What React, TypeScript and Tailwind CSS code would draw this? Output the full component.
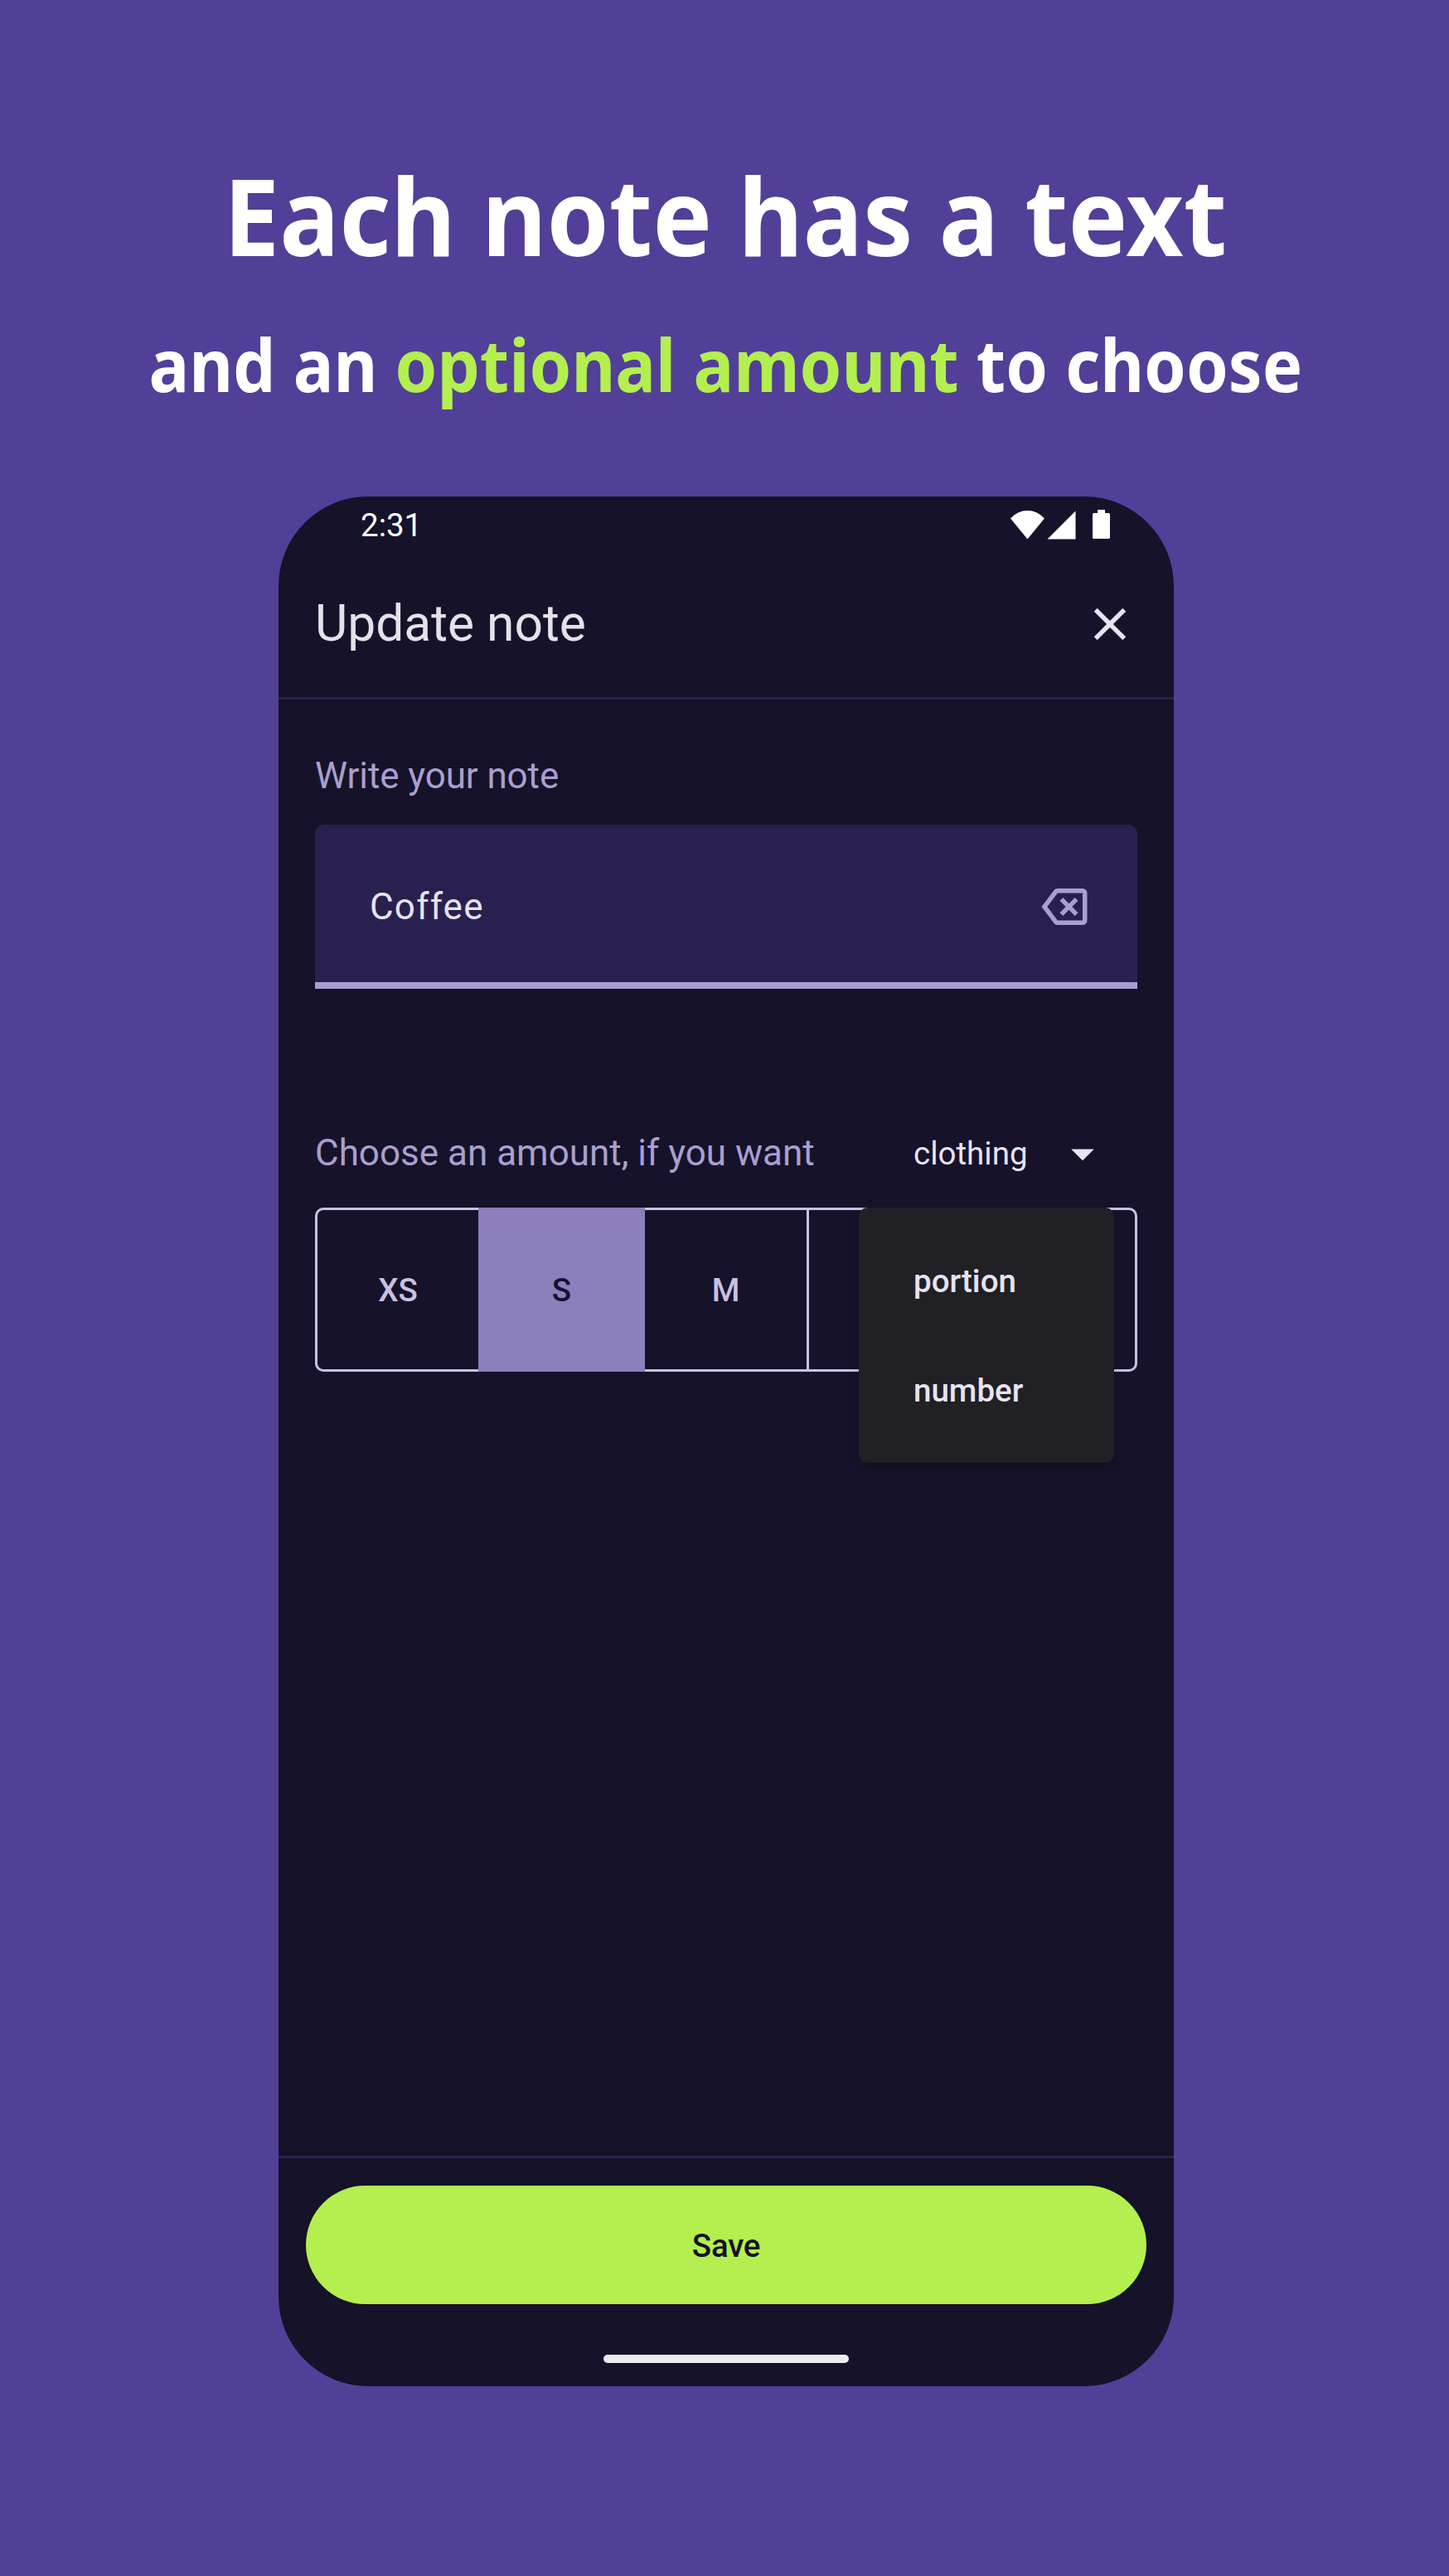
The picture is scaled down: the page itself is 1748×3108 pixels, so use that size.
import React from "react";

function StatusBar() {
  return (
    <div className="flex h-[66px] shrink-0 items-start justify-between pl-[99px] pr-[77px] text-white">
      <span className="mt-[10px] text-[38.5px] leading-[49px]">2:31</span>
      <div className="mt-4 flex items-start text-white">
        <svg className="mt-px h-[35px] w-[41px]" viewBox="0 0 41 35" fill="currentColor">
          <path d="M0 9.500Q8.500 0 20.500 0T41 9.500L20.500 34.500Z" />
        </svg>
        <svg className="ml-[3px] mt-px h-[35px] w-[35px]" viewBox="0 0 35 35" fill="currentColor">
          <path d="M0.500 34.500L34.500 0.500V34.500Z" />
        </svg>
        <svg className="ml-5 h-[35px] w-[21px]" viewBox="0 0 21 35" fill="currentColor">
          <path d="M6 0h9v4h4.500Q21 4 21 5.500v28Q21 35 19.500 35h-18Q0 35 0 33.500v-28Q0 4 1.500 4H6z" />
        </svg>
      </div>
    </div>
  );
}

function Header() {
  return (
    <header className="flex h-[179px] shrink-0 items-center justify-between border-b-[3px] border-[#2a204f] px-11">
      <h1 className="text-[60.5px] leading-[72px] text-[#e6e1e9]">Update note</h1>
      <button className="h-[66px] w-[66px] text-[#e7e3f0]">
        <svg viewBox="0 0 24 24" fill="currentColor">
          <path d="M19 6.410L17.590 5 12 10.590 6.410 5 5 6.410 10.590 12 5 17.590 6.410 19 12 13.410 17.590 19 19 17.590 13.410 12z" />
        </svg>
      </button>
    </header>
  );
}

function NoteField() {
  return (
    <div className="flex h-[198px] items-center justify-between rounded-t-[11px] border-b-8 border-[#a99fcf] bg-[#2a204f] pl-[66px] pr-[55px] pt-2">
      <span className="text-[44px] leading-[52px] tracking-[1.2px] text-[#e7e3f0]">Coffee</span>
      <svg className="h-[66px] w-[66px] text-[#a99fcf]" viewBox="0 -960 960 960" fill="currentColor">
        <path d="m456-320 104-104 104 104 56-56-104-104 104-104-56-56-104 104-104-104-56 56 104 104-104 104 56 56Zm-96 160q-19 0-36-8.500T296-192L80-480l216-288q11-15 28-23.500t36-8.500h440q33 0 56.500 23.500T880-720v480q0 33-23.500 56.500T800-160H360ZM180-480l180 240h440v-480H360L180-480Z" />
      </svg>
    </div>
  );
}

function UnitMenu() {
  return (
    <ul className="absolute right-7 top-0 h-[308px] w-[308px] rounded-[11px] bg-[#202025] pb-[21px] pl-[66px] pt-[23px] font-medium text-[#e7e3f0] shadow-[0_4px_12px_rgba(0,0,0,0.2)]">
      <li className="flex h-[132px] items-center">portion</li>
      <li className="flex h-[132px] items-center">number</li>
    </ul>
  );
}

function SizePicker() {
  return (
    <div className="relative text-[38.500px]">
      <div className="grid h-[198px] grid-cols-[194px_201px_198px_198px_1fr] rounded-[10px] border-[3px] border-[#c8c1e2] font-medium text-[#c8c1e2]">
        <div className="flex items-center justify-center pt-[2px]">XS</div>
        <div className="-my-[3px] flex items-center justify-center bg-[#8c7fbc] pt-[2px] text-[#17122a]">S</div>
        <div className="flex items-center justify-center border-r-[3px] border-[#c8c1e2] pt-[2px]">M</div>
        <div className="border-r-[3px] border-[#c8c1e2]" />
        <div />
      </div>
      <UnitMenu />
    </div>
  );
}

export default function App() {
  return (
    <div className="flex h-[3108px] w-[1748px] flex-col bg-[#523f98] font-['Roboto']">
      <div className="mt-[170px] flex shrink-0 flex-col items-center whitespace-nowrap pl-[2px] font-['Noto_Sans'] font-bold text-white">
        <div className="h-[177px] scale-x-[0.927] text-[130px] leading-[177px]">Each note has a text</div>
        <div className="mt-[32px] h-[120px] scale-x-[0.925] text-[88px] leading-[120px]">
          and an <span className="text-[#b3ef4f]">optional amount</span> to choose
        </div>
      </div>

      <main className="ml-[336px] mt-[100px] flex h-[2280px] w-[1080px] shrink-0 flex-col overflow-hidden rounded-[108px] bg-[#161229]">
        <StatusBar />
        <Header />
        <section className="flex-1 px-11 pt-[66px]">
          <h2 className="h-[85px] text-[44px] leading-[52px] tracking-[-0.1px] text-[#a99fcf]">Write your note</h2>
          <NoteField />
          <div className="mt-[165px] flex h-[99px] items-start justify-between pr-[33px]">
            <span className="mt-[7px] text-[44px] leading-[52px] text-[#a99fcf]">Choose an amount, if you want</span>
            <div className="flex w-[237px] items-center justify-between text-[#e7e3f0]">
              <span className="pt-px text-[38.5px] leading-[66px]">clothing</span>
              <svg className="h-[66px] w-[66px]" viewBox="0 0 24 24" fill="currentColor">
                <path d="M7 10l5 5 5-5z" />
              </svg>
            </div>
          </div>
          <SizePicker />
        </section>
        <footer className="flex h-[278px] shrink-0 flex-col items-center border-t-[3px] border-[#2a204f] pt-[33px]">
          <button className="h-[143px] w-[1014px] rounded-full bg-[#b3ef4f] pt-[2px] text-[38.5px] font-medium tracking-[-0.2px] text-[#17122a]">Save</button>
          <div className="mt-[61px] h-[10px] w-[296px] rounded-full bg-[#ececee]" />
        </footer>
      </main>
    </div>
  );
}
